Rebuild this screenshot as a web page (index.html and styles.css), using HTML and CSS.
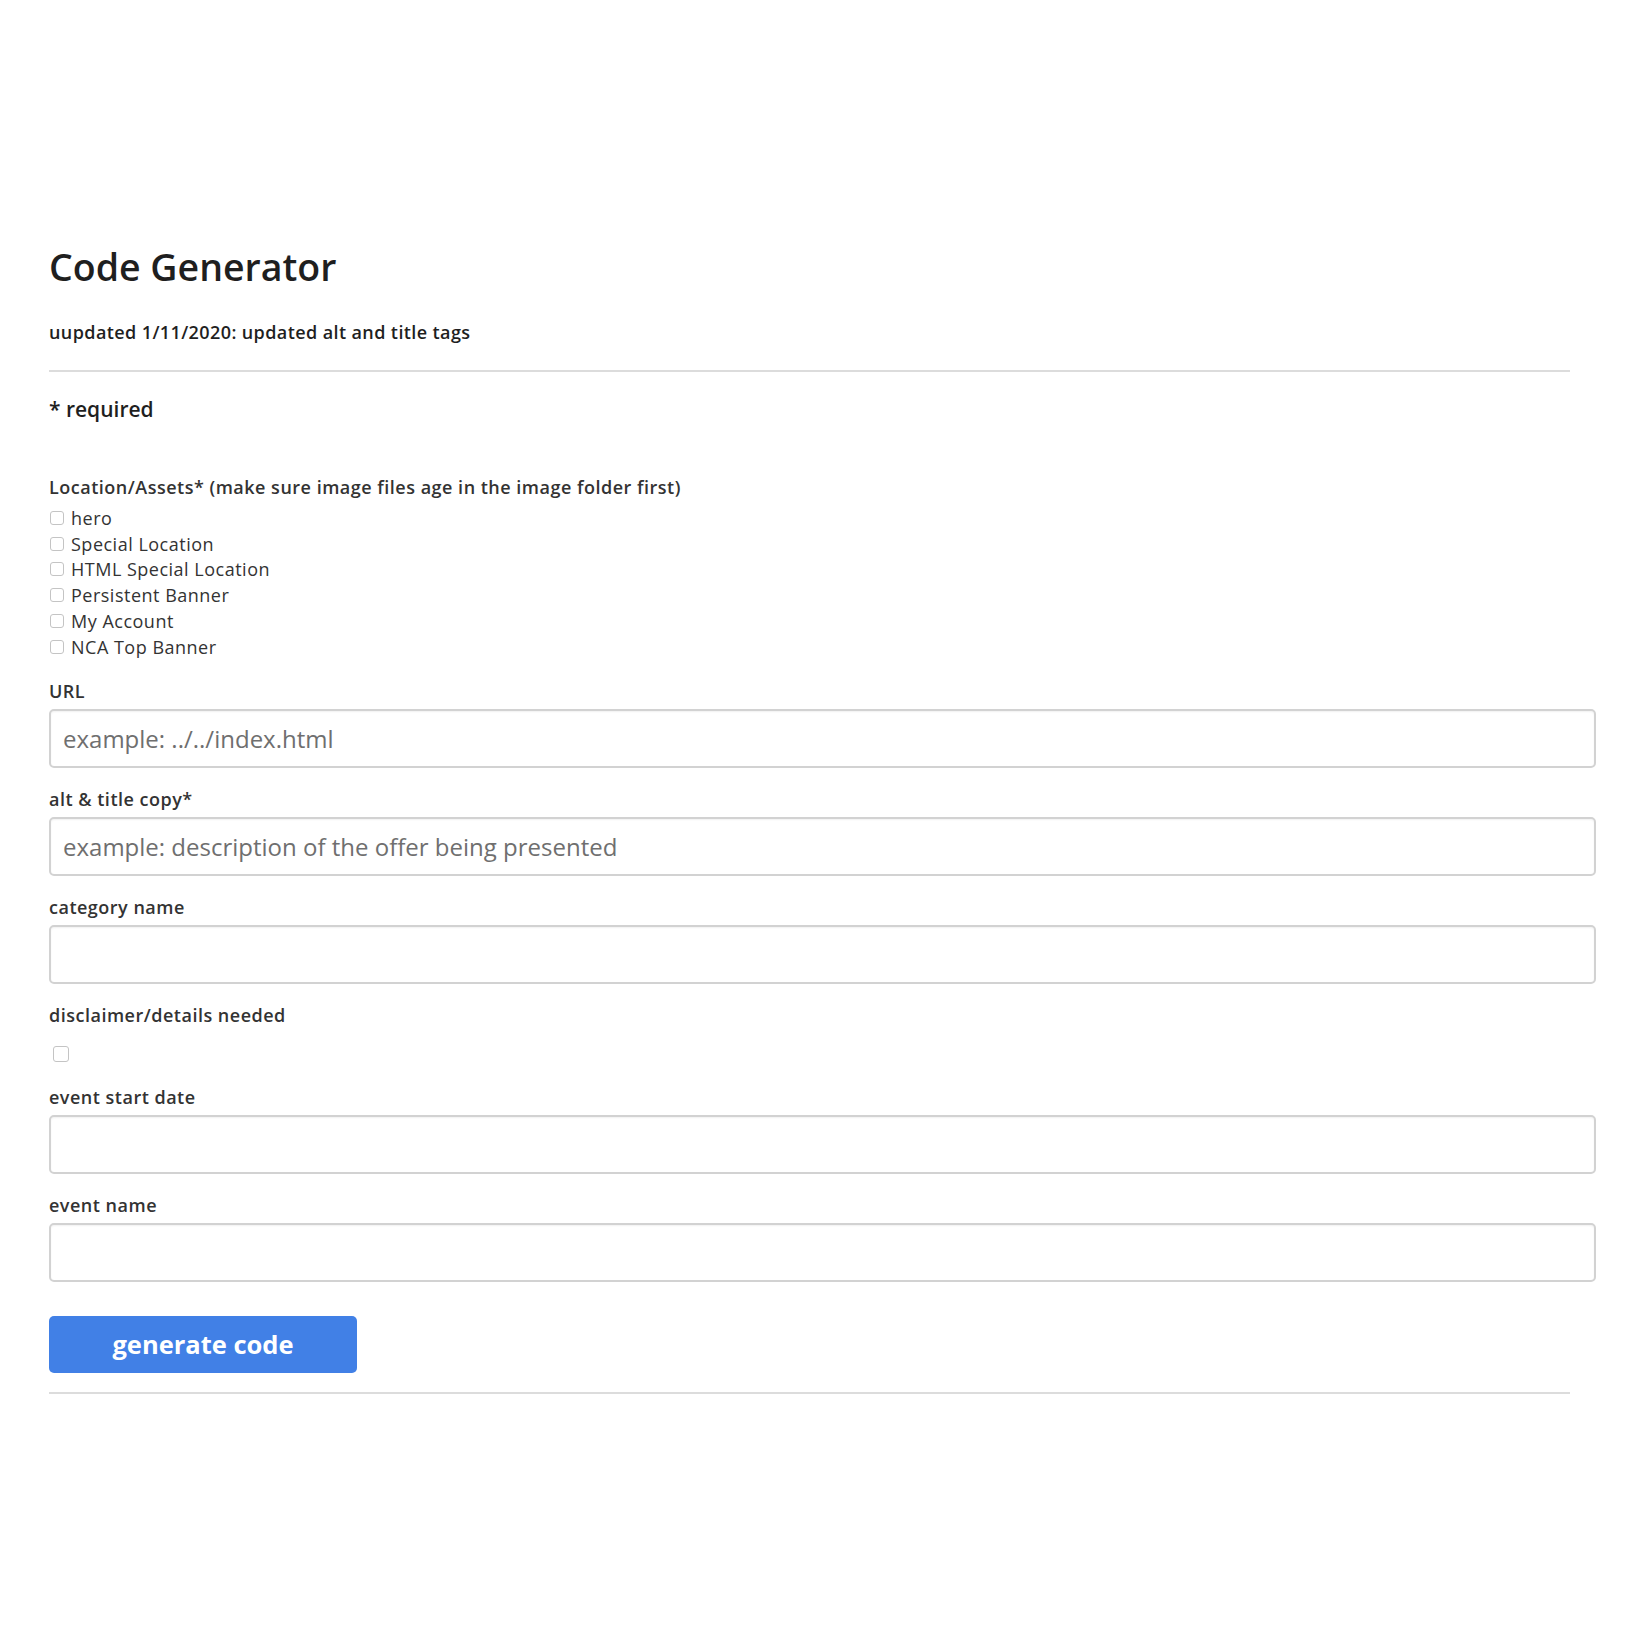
FILE: index.html
```html
<!DOCTYPE html>
<html>
<head>
<meta charset="utf-8">
<title>Code Generator</title>
<link rel="stylesheet" href="styles.css">
</head>
<body>
<div class="page">
  <h1 class="title">Code Generator</h1>
  <p class="note">uupdated 1/11/2020: updated alt and title tags</p>
  <hr class="rule">
  <h4 class="required">* required</h4>

  <div class="group group-assets">
    <div class="label">Location/Assets* (make sure image files age in the image folder first)</div>
    <div class="checks">
      <label class="check"><span class="box"></span>hero</label>
      <label class="check"><span class="box"></span>Special Location</label>
      <label class="check"><span class="box"></span>HTML Special Location</label>
      <label class="check"><span class="box"></span>Persistent Banner</label>
      <label class="check"><span class="box"></span>My Account</label>
      <label class="check"><span class="box"></span>NCA Top Banner</label>
    </div>
  </div>

  <div class="group">
    <div class="label">URL</div>
    <div class="field"><span class="placeholder">example: ../../index.html</span></div>
  </div>

  <div class="group">
    <div class="label">alt &amp; title copy*</div>
    <div class="field"><span class="placeholder">example: description of the offer being presented</span></div>
  </div>

  <div class="group">
    <div class="label">category name</div>
    <div class="field"></div>
  </div>

  <div class="group">
    <div class="label">disclaimer/details needed</div>
    <div class="single-check"><span class="box box-lg"></span></div>
  </div>

  <div class="group">
    <div class="label">event start date</div>
    <div class="field"></div>
  </div>

  <div class="group">
    <div class="label">event name</div>
    <div class="field"></div>
  </div>

  <div class="actions">
    <button class="btn">generate code</button>
  </div>
  <hr class="rule rule-bottom">
</div>
</body>
</html>
```

FILE: styles.css
```css
* { box-sizing: border-box; }
html, body { margin: 0; padding: 0; background: #fff; }
body {
  font-family: "Open Sans", "Noto Sans", sans-serif;
  color: #222;
}
.page {
  padding: 244px 0 0 49px;
  width: 1596px;
}
.title {
  margin: 0;
  font-size: 37.5px;
  line-height: 46px;
  font-weight: 600;
  color: #1f1f1f;
}
.note {
  margin: 30px 0 0;
  font-size: 18px;
  line-height: 24px;
  font-weight: 600;
  letter-spacing: 0.4px;
  color: #1f1f1f;
}
.rule {
  margin: 26px 26px 0 0;
  border: 0;
  border-top: 2px solid #dcdcdc;
  height: 0;
}
.required {
  margin: 23px 0 0;
  font-size: 21px;
  line-height: 28px;
  font-weight: 600;
  color: #1f1f1f;
}
.group { margin-bottom: 19px; }
.group-assets { margin-top: 52px; margin-bottom: 19px; }
.label {
  font-size: 18px;
  line-height: 24px;
  font-weight: 600;
  letter-spacing: 0.5px;
  color: #333;
  margin-bottom: 6px;
}
.group-assets .label { margin-bottom: 6px; }
.checks { display: flex; flex-direction: column; }
.check {
  display: flex;
  align-items: center;
  height: 25.8px;
  font-size: 18px;
  letter-spacing: 0.5px;
  color: #333;
}
.box {
  display: inline-block;
  width: 14px;
  height: 14px;
  border: 1px solid #c4c4c4;
  border-radius: 3px;
  background: #fff;
  margin: 0 7px 0 1px;
  flex: none;
}
.single-check { padding: 13px 0 3px 4px; height: 33px; }
.box-lg { width: 16px; height: 16px; display: block; margin: 0; }
.field {
  height: 59px;
  border: 2px solid #d2d2d2;
  border-radius: 5px;
  box-shadow: inset 0 1px 2px rgba(0,0,0,0.06);
  background: #fff;
  display: flex;
  align-items: center;
  padding: 0 12px;
}
.placeholder {
  font-size: 24px;
  color: #6f6f6f;
}
.actions { padding-top: 15px; }
.btn {
  width: 308px;
  height: 57px;
  border: 0;
  border-radius: 5px;
  background: #4180e6;
  color: #fff;
  font-family: inherit;
  font-size: 25.5px;
  font-weight: 700;
  padding: 0;
}
.rule-bottom { margin-top: 19px; }
```
